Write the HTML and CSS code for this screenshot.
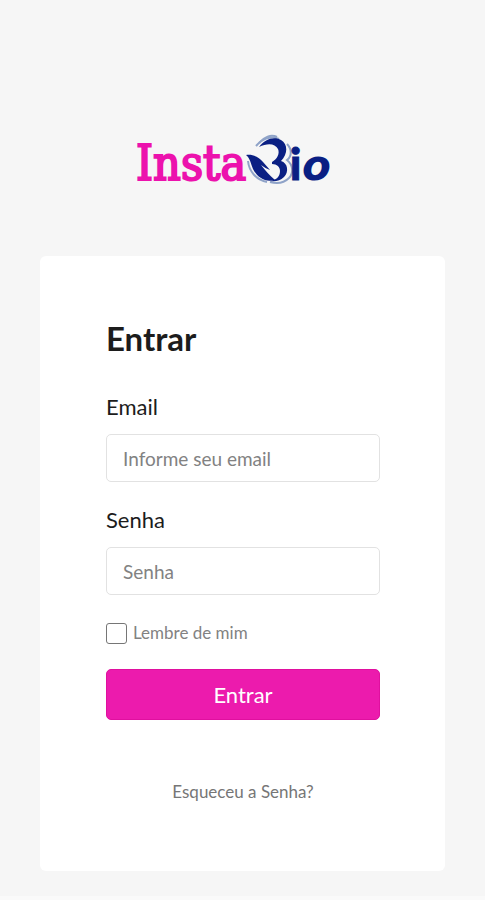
FILE: index.html
```html
<!DOCTYPE html>
<html lang="pt-BR">
<head>
<meta charset="utf-8">
<meta name="viewport" content="width=device-width, initial-scale=1">
<title>InstaBio</title>
<link rel="stylesheet" href="styles.css">
</head>
<body>
<main class="page">
  <svg class="logo" viewBox="0 0 200 60" role="img" aria-label="InstaBio">
    <text class="logo-insta" x="1" y="50">Insta</text>
    <g class="wing-soft">
      <path d="M121 16C127 9 136 5 144 9"/>
      <path d="M124 13C129 7 136 4 142 7"/>
      <path d="M152 14C157 19 157 26 152 30C158 35 159 43 154 48C149 53 142 54 135 52"/>
      <path d="M113 31C114 41 121 50 132 52"/>
    </g>
    <g class="wing">
      <path d="M124 17C130 9 139 6 146 10C153 14 153 24 146 31C153 33 154 42 149 47C145 51 140 52 135 51C141 50 145 47 145 41C145 37 142 34 137 34L137 32C142 29 145 24 143 19C140 13 132 13 124 17Z"/>
      <path d="M111 25C118 24 124 27 128 32L135 40C132 39 129 37 126 35C130 40 134 45 140 50C130 53 122 47 118 39C116 34 115 28 111 25Z"/>
    </g>
    <text class="logo-bio upright" x="155" y="50">i</text>
    <text class="logo-bio slanted" x="167" y="50">o</text>
  </svg>
  <form class="card">
    <h1 class="title">Entrar</h1>
    <label class="label" for="email">Email</label>
    <input class="field" id="email" type="email" placeholder="Informe seu email">
    <label class="label" for="senha">Senha</label>
    <input class="field" id="senha" type="password" placeholder="Senha">
    <label class="remember"><input class="check" type="checkbox">Lembre de mim</label>
    <button class="submit" type="submit">Entrar</button>
    <a class="forgot" href="#">Esqueceu a Senha?</a>
  </form>
</main>
</body>
</html>
```
FILE: styles.css
```css
* { box-sizing: border-box; }
body {
  margin: 0;
  background: #f6f6f6;
  color: #1c1c1c;
  font-family: Lato, "Liberation Sans", sans-serif;
}
.page {
  display: flex;
  flex-direction: column;
  min-height: 100vh;
  padding: 130px 40px 24px;
  border-bottom: 4px solid #fafafa;
}
.logo {
  width: 200px;
  height: 60px;
  margin: 0 auto 66px;
  overflow: visible;
  translate: -8px 0;
}
.logo-insta {
  fill: #ec12ad;
  stroke: #ec12ad;
  stroke-width: 2;
  font-family: "DejaVu Serif Condensed", "DejaVu Serif", serif;
  font-stretch: condensed;
  font-size: 48px;
}
.logo-bio {
  fill: #0a1f83;
}
.upright {
  stroke: #0a1f83;
  stroke-width: 1;
  font-family: Lato, sans-serif;
  font-weight: 900;
  font-size: 43px;
}
.slanted {
  font-family: "DejaVu Sans", sans-serif;
  font-weight: 700;
  font-style: oblique;
  font-size: 42px;
}
.wing { fill: #0a1f83; }
.wing-soft {
  fill: none;
  stroke: #8fa3c8;
  stroke-width: 2;
}
.card {
  display: flex;
  flex-direction: column;
  padding: 62px 65px 67px 66px;
  border-radius: 6px;
  background: #fff;
}
.title {
  margin: 0 0 35px;
  font-size: 33px;
  line-height: 40px;
  font-weight: 700;
}
.label {
  margin-bottom: 13px;
  font-size: 22px;
  line-height: 28px;
  font-weight: 400;
}
.field {
  width: 100%;
  height: 48px;
  margin-bottom: 24px;
  padding: 0 16px;
  border: 1px solid #e2e2e2;
  border-radius: 5px;
  background: #fff;
  color: #1c1c1c;
  font: inherit;
  font-size: 19px;
}
.field::placeholder { color: #828282; opacity: 1; }
.remember {
  display: flex;
  align-items: center;
  gap: 6px;
  margin: 2px 0 24px;
  color: #828282;
  font-size: 17px;
  line-height: 24px;
}
.check {
  appearance: none;
  width: 21px;
  height: 21px;
  margin: 0;
  border: 1px solid #767676;
  border-radius: 3px;
  background: #fff;
}
.check:checked { background: #ec1bad; }
.submit {
  height: 51px;
  margin-bottom: 60px;
  border: 1px solid #e0109f;
  border-radius: 5px;
  background: #ec1bad;
  color: #fff;
  font: inherit;
  font-size: 22px;
}
.forgot {
  align-self: center;
  color: #767676;
  font-size: 17px;
  line-height: 24px;
  text-decoration: none;
}
```
